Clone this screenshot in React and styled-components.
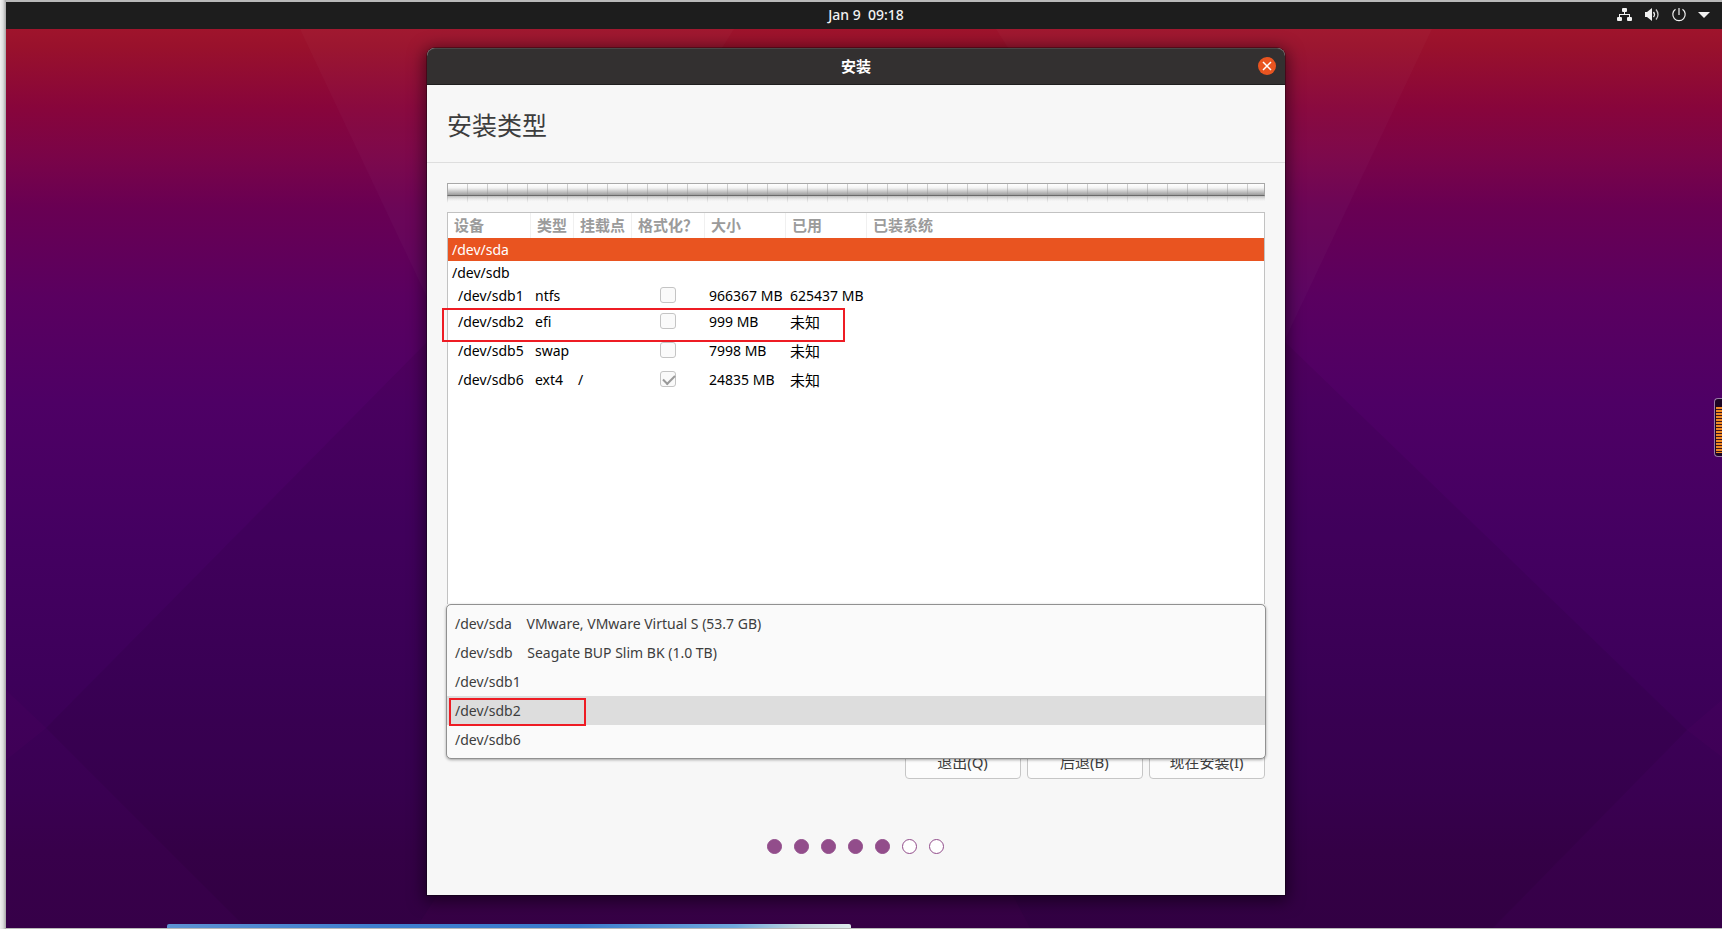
import React, { useState } from 'react'
import styled, { createGlobalStyle } from 'styled-components'

//data
const columns = ['设备', '类型', '挂载点', '格式化？', '大小', '已用', '已装系统']
const widths = [83, 43, 58, 73, 81, 81]

const disks = [
  { device: '/dev/sda', disk: true },
  { device: '/dev/sdb', disk: true },
  { device: '/dev/sdb1', type: 'ntfs', size: '966367 MB', used: '625437 MB', short: true },
  { device: '/dev/sdb2', type: 'efi', size: '999 MB', marked: true },
  { device: '/dev/sdb5', type: 'swap', size: '7998 MB' },
  { device: '/dev/sdb6', type: 'ext4', mount: '/', size: '24835 MB', format: true },
]

const bootDevices = [
  { device: '/dev/sda', info: 'VMware, VMware Virtual S (53.7 GB)' },
  { device: '/dev/sdb', info: 'Seagate BUP Slim BK (1.0 TB)' },
  { device: '/dev/sdb1' },
  { device: '/dev/sdb2' },
  { device: '/dev/sdb6' },
]

const steps = [true, true, true, true, true, false, false]

const GlobalStyle = createGlobalStyle`
  * {
    box-sizing: border-box;
  }
  body {
    margin: 0;
    font-family: 'Noto Sans', 'Noto Sans CJK SC', sans-serif;
    font-size: 14px;
    color: #3d3d3d;
    text-spacing-trim: space-all;
  }
  button, select, input {
    font: inherit;
    color: inherit;
    margin: 0;
  }
`

const Host = styled.div`
  display: flex;
  min-height: 100vh;
  padding: 2px 0 1px 6px;
  background:
    linear-gradient(90deg, #f0f0f0, #dedede 3px, #a6a6a6 6px, transparent 6px),
    #b9b9b9;
`

const Desktop = styled.div`
  position: relative;
  flex: 1;
  display: flex;
  flex-direction: column;
  min-width: 0;
  overflow: hidden;
  background: linear-gradient(
    #9f142c 27px,
    #99112c 45px,
    #88053b 105px,
    #7a0448 155px,
    #690053 205px,
    #5a0060 295px,
    #4e0065 400px,
    #440061 540px,
    #3d005a 680px,
    #3a0052 790px,
    #38004b 850px,
    #360048
  );
`

const Wallpaper = styled.svg`
  position: absolute;
  inset: 0;
  width: 100%;
  height: 100%;
`

const Panel = styled.header`
  position: relative;
  display: grid;
  grid-template-columns: 1fr auto 1fr;
  align-items: center;
  height: 27px;
  padding: 0 12px 2px 0;
  background: #1d1d1d;
  color: #f2f2f2;
`

const Clock = styled.time`
  grid-column: 2;
  padding-left: 16px;
  line-height: 20px;
  font-weight: 500;
  white-space: pre;
`

const SystemMenu = styled.button`
  justify-self: end;
  display: flex;
  align-items: center;
  gap: 11px;
  padding: 0;
  border: 0;
  background: none;
  svg {
    display: block;
  }
`

const Stage = styled.main`
  position: relative;
  flex: 1;
  display: flex;
  justify-content: center;
  padding: 19px 16px 33px 0;
`

const Window = styled.section`
  display: flex;
  flex-direction: column;
  width: 100%;
  max-width: 858px;
  border-radius: 8px 8px 0 0;
  background: #f7f7f7;
  box-shadow: 0 0 0 1px rgba(0, 0, 0, 0.3), 0 3px 16px 3px rgba(0, 0, 0, 0.5);
`

const TitleBar = styled.div`
  display: grid;
  grid-template-columns: 1fr auto 1fr;
  align-items: center;
  height: 37px;
  padding: 0 9px 1px;
  border-top: 1px solid #484646;
  border-bottom: 1px solid #1f1e1e;
  border-radius: 8px 8px 0 0;
  background: #333030;
  color: #fff;
`

const WindowTitle = styled.div`
  grid-column: 2;
  font-size: 15px;
  font-weight: 700;
  line-height: 20px;
`

const CloseButton = styled.button`
  justify-self: end;
  width: 18px;
  height: 18px;
  padding: 0;
  border: 0;
  border-radius: 50%;
  background: #e95420;
  svg {
    display: block;
  }
`

const PageTitle = styled.h1`
  margin: 0;
  padding: 22px 20px 19px;
  border-bottom: 1px solid #dedede;
  font-size: 25px;
  font-weight: 400;
  line-height: 36px;
`

const Body = styled.div`
  flex: 1;
  display: flex;
  flex-direction: column;
  padding: 20px 20px 41px;
`

const UsageBar = styled.div`
  height: 13px;
  border: 1px solid #a8a8a8;
  border-bottom-color: #6a6a6a;
  background:
    repeating-linear-gradient(90deg, transparent 0 19px, rgba(150, 150, 150, 0.45) 19px 20px),
    linear-gradient(#fff, #f4f4f4 35%, #9c9c9c);
`

const UsageReflection = styled.div`
  height: 7px;
  margin-bottom: 9px;
  background:
    linear-gradient(rgba(247, 247, 247, 0), #f7f7f7),
    repeating-linear-gradient(90deg, #b4b4b4 0 1px, transparent 1px 20px),
    linear-gradient(#bdbdbd, #f7f7f7 80%);
`

const TableFrame = styled.div`
  flex: 1;
  min-height: 200px;
  border: 1px solid #c2c2c2;
  border-bottom: 0;
  background: #fff;
`

const Partitions = styled.table`
  width: 100%;
  table-layout: fixed;
  border-collapse: separate;
  border-spacing: 0;
  color: #000;
  th {
    height: 25px;
    padding: 0 0 2px 6px;
    border-right: 1px solid #f0f0f0;
    color: #9b9b9b;
    font-size: 15px;
    font-weight: 700;
    line-height: 20px;
    text-align: left;
    white-space: nowrap;
  }
  th:last-child {
    border-right: 0;
  }
`

const Row = styled.tr`
  height: ${props => (props.$short ? 23 : 29)}px;
  background: ${props => (props.$selected ? '#e95420' : 'transparent')};
  color: ${props => (props.$selected ? '#fff' : 'inherit')};
`

const Cell = styled.td`
  position: relative;
  padding: 0 0 0 ${props => (props.$indent ? 10 : 4)}px;
  font-size: ${props => (props.$unknown ? 15 : 14)}px;
  line-height: 20px;
  white-space: nowrap;
`

const CheckCell = styled(Cell)`
  padding: 0 1px 2px 0;
  line-height: 16px;
`

const CheckBox = styled.input`
  appearance: none;
  display: block;
  width: 16px;
  height: 16px;
  margin: 0 auto;
  border: 1px solid #c4c4c4;
  border-radius: 3px;
  background: #fafafa;
  &:checked::after {
    content: '';
    display: block;
    width: 10px;
    height: 5px;
    margin: 3px 2px;
    border: solid #9a9a9a;
    border-width: 0 0 2px 2px;
    transform: rotate(-45deg);
  }
`

const RowMarker = styled.span`
  position: absolute;
  z-index: 1;
  top: 1px;
  left: -6px;
  width: 403px;
  height: 34px;
  border: 2px solid #ee1c24;
  pointer-events: none;
`

const BootPicker = styled.div`
  position: relative;
  height: 143px;
`

const BootMarker = styled.span`
  position: absolute;
  z-index: 2;
  top: 94px;
  left: 2px;
  width: 137px;
  height: 28px;
  border: 2px solid #ee1c24;
  pointer-events: none;
`

const BootList = styled.select`
  position: absolute;
  z-index: 1;
  top: 0;
  left: -1px;
  width: calc(100% + 2px);
  height: 155px;
  padding: 4px 0;
  overflow: hidden;
  border: 1px solid #919191;
  border-radius: 5px;
  outline: 0;
  background: #fafafa;
  box-shadow: 0 1px 3px rgba(0, 0, 0, 0.35);
  option {
    min-height: 29px;
    padding: 5px 8px 4px;
    color: #3d3d3d;
    line-height: 20px;
    white-space: pre;
  }
  option:checked {
    background: #ddd linear-gradient(#ddd, #ddd);
    color: #3d3d3d;
  }
`

const Actions = styled.div`
  display: flex;
  justify-content: flex-end;
  gap: 6px;
`

const Action = styled.button`
  width: 116px;
  height: 32px;
  padding: 0 1px 2px 0;
  border: 1px solid #c6c6c6;
  border-radius: 4px;
  background: #fcfcfc;
  font-size: 15px;
  line-height: 20px;
`

const Steps = styled.div`
  display: flex;
  justify-content: center;
  gap: 12px;
  margin-top: 60px;
  padding-right: 2px;
`

const Step = styled.span`
  width: 15px;
  height: 15px;
  border: 1px solid #924d8b;
  border-radius: 50%;
  background: ${props => (props.$done ? '#924d8b' : '#fff')};
`

const Dock = styled.div`
  position: absolute;
  bottom: 0;
  left: 161px;
  width: 40%;
  max-width: 684px;
  height: 4px;
  border-radius: 2px 2px 0 0;
  background: linear-gradient(90deg, #5d92d2, #3f7fce 30%, #3a7bcc 60%, #6fa8dc 83%, #c3d6de 93%, #dfeaec);
`

const Gauge = styled.div`
  position: absolute;
  top: 396px;
  right: 0;
  width: 8px;
  height: 59px;
  padding: 8px 0 3px 1px;
  border: 1px solid #9a7aa6;
  border-right: 0;
  border-radius: 4px 0 0 4px;
  background: #1c0524;
  &::before {
    content: '';
    display: block;
    height: 100%;
    background: repeating-linear-gradient(#f08a24 0 2px, #3a1420 2px 3px);
  }
`

function DesktopBackground() {
  return (
    <Wallpaper viewBox="0 0 1716 926" preserveAspectRatio="none" aria-hidden="true">
      <path d="M294 27L480 420 L728 27Z" fill="#fff" opacity=".025" />
      <path d="M1426 27L1240 420 L990 27Z" fill="#fff" opacity=".025" />
      <path d="M40 726L421 340H1279L1681 728L1487 926H240Z" fill="#000" opacity=".06" />
      <path d="M0 688L40 726L0 758Z" fill="#60006a" opacity=".12" />
      <path d="M1716 698L1681 728L1716 755Z" fill="#60006a" opacity=".12" />
      <path d="M410 926L440 880H1000L1024 926Z" fill="#40004a" opacity=".35" />
    </Wallpaper>
  )
}

function StatusIcons() {
  return (
    <>
      <svg width="16" height="16" viewBox="0 0 16 16" fill="#f2f2f2">
        <rect x="5" y="1" width="5" height="4" rx="1" />
        <rect x="0" y="10" width="5" height="4" rx="1" />
        <rect x="10" y="10" width="5" height="4" rx="1" />
        <path d="M7 5h1v2h5v3h-1V8H3v2H2V7h5z" />
      </svg>
      <svg width="16" height="16" viewBox="0 0 16 16" fill="none" stroke="#f2f2f2">
        <path d="M1 5h2l5-4v13l-5-4H1z" fill="#f2f2f2" stroke="none" />
        <path d="M9.500 5q2 2.500 0 5" strokeWidth="1.300" />
        <path d="M12 2.500q4 5 0 10" strokeWidth="1.300" opacity=".8" />
      </svg>
      <svg width="16" height="16" viewBox="0 0 16 16" fill="none" stroke="#f2f2f2" strokeWidth="1.200">
        <path d="M4.500 2.300a6.200 6.200 0 1 0 7 0M8 1v7" />
      </svg>
      <svg width="12" height="16" viewBox="0 0 12 16" fill="#f2f2f2">
        <path d="M0 5h12l-6 6z" />
      </svg>
    </>
  )
}

function PartitionTable() {
  const [selected, setSelected] = useState('/dev/sda')

  return (
    <Partitions>
      <colgroup>
        {widths.map((width, i) => (
          <col key={i} style={{ width }} />
        ))}
        <col />
      </colgroup>
      <thead>
        <tr>
          {columns.map(column => (
            <th key={column}>{column}</th>
          ))}
        </tr>
      </thead>
      <tbody>
        {disks.map(row => (
          <Row
            key={row.device}
            $short={row.disk || row.short}
            $selected={row.device === selected}
            onClick={() => setSelected(row.device)}
          >
            <Cell $indent={!row.disk}>
              {row.device}
              {row.marked && <RowMarker />}
            </Cell>
            <Cell>{row.type}</Cell>
            <Cell>{row.mount}</Cell>
            <CheckCell>
              {!row.disk && (
                <CheckBox
                  type="checkbox"
                  aria-label={`格式化 ${row.device}`}
                  defaultChecked={row.format}
                />
              )}
            </CheckCell>
            <Cell>{row.size}</Cell>
            <Cell $unknown={!row.used}>{row.disk ? null : row.used || '未知'}</Cell>
            <Cell />
          </Row>
        ))}
      </tbody>
    </Partitions>
  )
}

function BootDevice() {
  const [device, setDevice] = useState('/dev/sdb2')

  return (
    <BootPicker>
      <BootList
        size={5}
        aria-label="安装启动引导器的设备"
        value={device}
        onChange={e => setDevice(e.target.value)}
      >
        {bootDevices.map(item => (
          <option key={item.device} value={item.device}>
            {item.info ? `${item.device}${'\u00a0'.repeat(4)}${item.info}` : item.device}
          </option>
        ))}
      </BootList>
      <BootMarker />
    </BootPicker>
  )
}

function App() {
  return (
    <Host>
      <GlobalStyle />
      <Desktop>
        <DesktopBackground />
        <Panel>
          <Clock>{'Jan 9  09:18'}</Clock>
          <SystemMenu aria-label="System">
            <StatusIcons />
          </SystemMenu>
        </Panel>
        <Stage>
          <Window>
            <TitleBar>
              <WindowTitle>安装</WindowTitle>
              <CloseButton aria-label="关闭">
                <svg width="18" height="18" viewBox="0 0 18 18" stroke="#fff" strokeWidth="1.500">
                  <path d="M5 5l8 8M13 5l-8 8" />
                </svg>
              </CloseButton>
            </TitleBar>
            <PageTitle>安装类型</PageTitle>
            <Body>
              <UsageBar />
              <UsageReflection />
              <TableFrame>
                <PartitionTable />
              </TableFrame>
              <BootDevice />
              <Actions>
                <Action>退出(Q)</Action>
                <Action>后退(B)</Action>
                <Action>现在安装(I)</Action>
              </Actions>
              <Steps>
                {steps.map((done, i) => (
                  <Step key={i} $done={done} />
                ))}
              </Steps>
            </Body>
          </Window>
        </Stage>
        <Dock />
        <Gauge />
      </Desktop>
    </Host>
  )
}

export default App
